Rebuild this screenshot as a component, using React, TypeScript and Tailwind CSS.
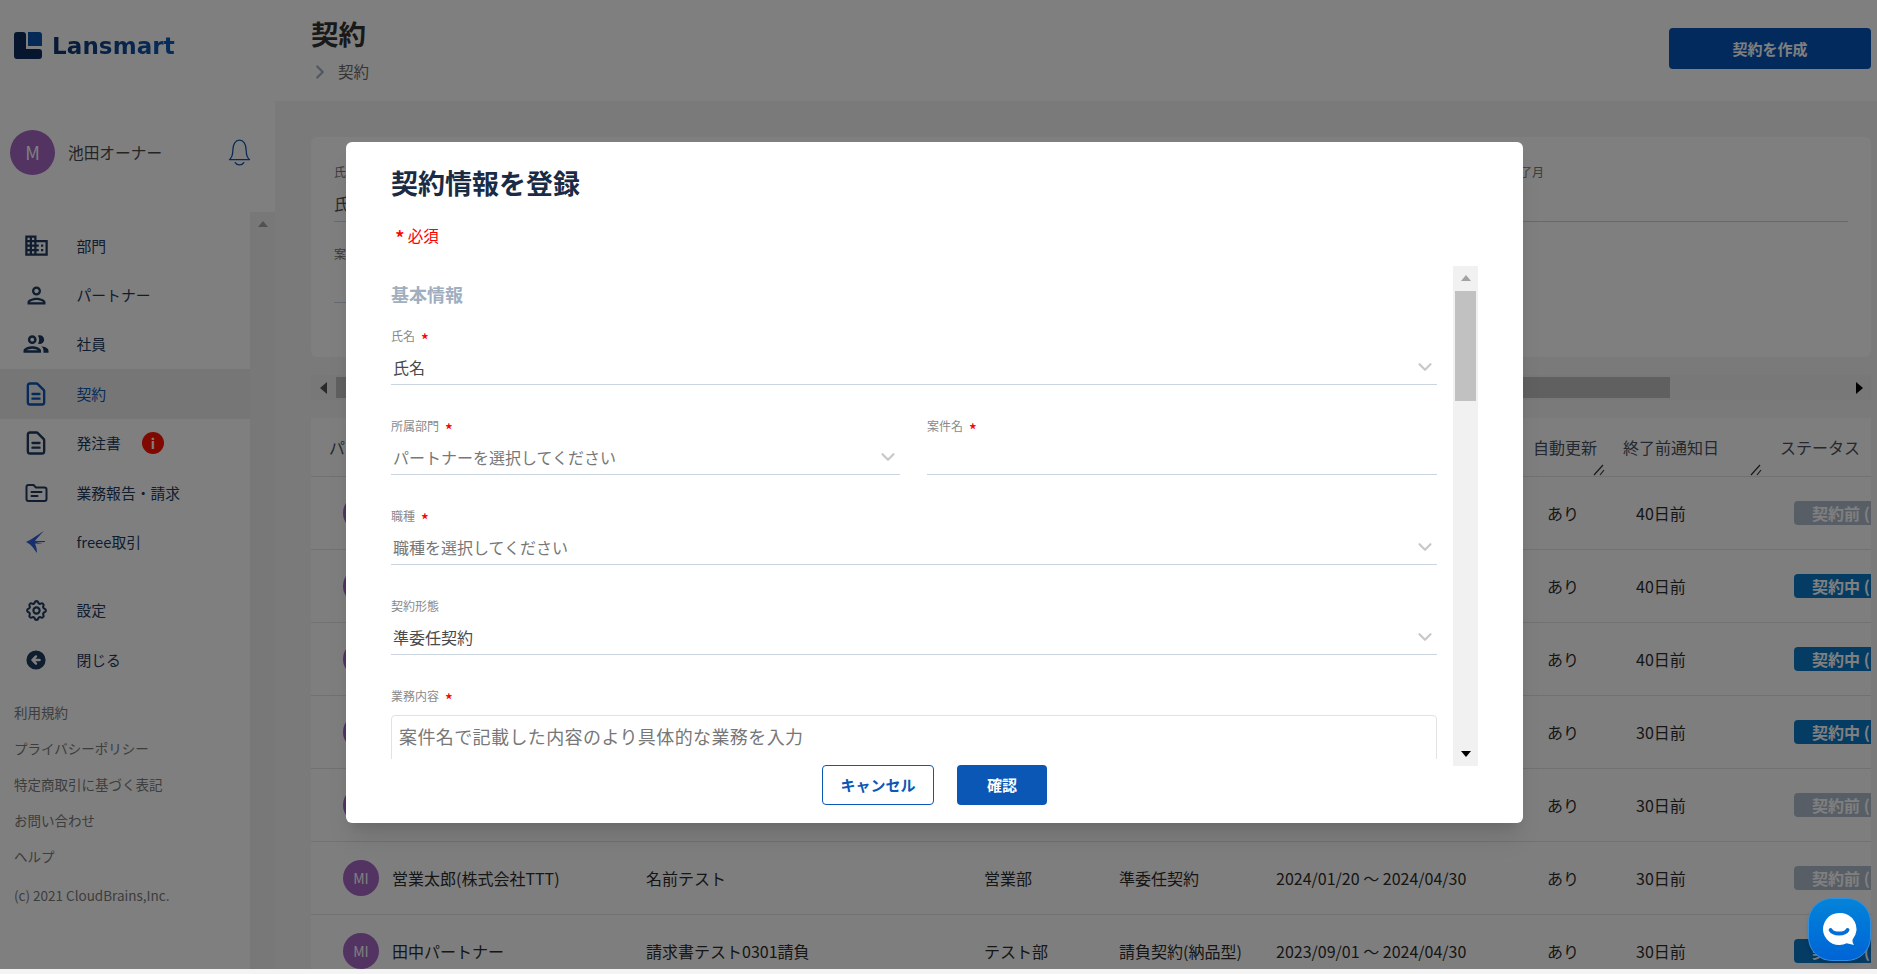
import { MdDomain, MdOutlinePerson, MdOutlinePeople } from "react-icons/md";
import { HiOutlineDocumentText, HiOutlineCog, HiArrowCircleLeft } from "react-icons/hi";
import { ChevronDown, ChevronRight } from "lucide-react";
import type { ReactNode } from "react";

const font = { fontFamily: '"Noto Sans CJK JP", "Noto Sans", sans-serif' };

function FolderIcon() {
  return (
    <svg width="25" height="24" viewBox="0 0 24 24" fill="none" stroke="currentColor" strokeWidth="2" strokeLinejoin="round" strokeLinecap="round">
      <path d="M2 6a2 2 0 0 1 2-2h5l2.5 2.5H20a2 2 0 0 1 2 2V18a2 2 0 0 1-2 2H4a2 2 0 0 1-2-2z" />
      <path d="M7 11h10M7 15h6" />
    </svg>
  );
}

function FreeeIcon() {
  return (
    <svg width="20" height="22" viewBox="0 0 20 22" fill="#2f5fd8">
      <path d="M0 11 C5 9 11 4 18 0 C14 4 11 7 9 10 L19 10 L19 11 L10 11.5 L17 13 L9 12.5 C10 15 11 18 11 22 C8 18 5 13 0 11 Z" />
    </svg>
  );
}

function Bell() {
  return (
    <svg width="23" height="29" viewBox="0 0 24 30" fill="none" stroke="#1253ad" strokeWidth="1.3" strokeLinecap="round" strokeLinejoin="round">
      <path d="M1.500 22.500c2.500-2 3.500-5 3.500-9.500C5 6 8 2 12 2s7 4 7 11c0 4.500 1 7.500 3.500 9.500z" />
      <path d="M7.500 25.500c1 1.700 2.700 2.500 4.500 2.500s3.500-.8 4.500-2.500" />
    </svg>
  );
}

function Logo() {
  return (
    <div className="flex items-center gap-[10px]">
      <svg width="28" height="27" viewBox="0 0 28 27">
        <path d="M3 0h6a3 3 0 0 1 3 3v14h13a3 3 0 0 1 3 3v4a3 3 0 0 1-3 3H3a3 3 0 0 1-3-3V3a3 3 0 0 1 3-3z" fill="#0c2c5e" />
        <path d="M14 0h11a3 3 0 0 1 3 3v11H14z" fill="#0a54b0" />
      </svg>
      <span
        className="mt-[1px] bg-gradient-to-r from-[#11336a] to-[#0a5cbc] bg-clip-text text-[23px] leading-none font-bold tracking-[0.1px] text-transparent"
        style={{ fontFamily: '"DejaVu Sans", sans-serif' }}
      >
        Lansmart
      </span>
    </div>
  );
}

function NavItem({ icon, label, active, badge, mt }: { icon: ReactNode; label: string; active?: boolean; badge?: boolean; mt?: string }) {
  return (
    <div className={`flex h-[49.400px] items-center ${active ? "bg-[#ececec] text-[#0b57b5]" : "text-[#1e3a5f]"} ${mt ?? ""}`}>
      <span className="flex w-[76.500px] shrink-0 items-center justify-center pr-[4.500px]">{icon}</span>
      <span className="text-[14.800px]">{label}</span>
      {badge && (
        <span className="ml-[21px] flex h-[22px] w-[22px] items-center justify-center rounded-full bg-[#ff1200] text-[14px] font-bold text-white">
          i
        </span>
      )}
    </div>
  );
}

function Sidebar() {
  const links = ["利用規約", "プライバシーポリシー", "特定商取引に基づく表記", "お問い合わせ", "ヘルプ"];
  return (
    <aside className="flex w-[275px] shrink-0 flex-col bg-white">
      <div className="h-[212px] shrink-0">
        <div className="pt-[32px] pl-[14px]">
          <Logo />
        </div>
        <div className="mt-[71px] flex items-center pl-[10px]">
          <div className="flex h-[45px] w-[45px] items-center justify-center rounded-full bg-[#a466c4] text-[18px] text-white">M</div>
          <span className="ml-[13px] text-[15.700px] text-[#4a4a4a]">池田オーナー</span>
          <span className="ml-[66px]">
            <Bell />
          </span>
        </div>
      </div>
      <div className="flex min-h-0 flex-1">
        <div className="w-[250px] pt-[9px]">
          <NavItem icon={<MdDomain size={27} />} label="部門" />
          <NavItem icon={<MdOutlinePerson size={27} />} label="パートナー" />
          <NavItem icon={<MdOutlinePeople size={30} />} label="社員" />
          <NavItem icon={<HiOutlineDocumentText size={28} />} label="契約" active />
          <NavItem icon={<HiOutlineDocumentText size={28} />} label="発注書" badge />
          <NavItem icon={<FolderIcon />} label="業務報告・請求" />
          <NavItem icon={<FreeeIcon />} label="freee取引" />
          <NavItem icon={<HiOutlineCog size={25} />} label="設定" mt="mt-[19px]" />
          <NavItem icon={<HiArrowCircleLeft size={24} />} label="閉じる" />
          <div className="mt-[17px] flex flex-col gap-[16px] pl-[14px] text-[13.500px] leading-[20px] text-[#7a7a7a]">
            {links.map((l) => (
              <span key={l}>{l}</span>
            ))}
            <span className="mt-[3px] text-[13.500px]">(c) 2021 CloudBrains,Inc.</span>
          </div>
        </div>
        <div className="flex w-[25px] justify-center bg-[#f1f1f1] pt-[9px]">
          <span className="h-0 w-0 border-x-[5px] border-b-[6px] border-x-transparent border-b-[#a3a3a3]" />
        </div>
      </div>
    </aside>
  );
}

function Badge({ live }: { live: boolean }) {
  return (
    <span
      className={`flex h-[24px] w-[77px] items-center overflow-hidden rounded-l-[4px] pl-[18px] text-[16px] font-bold whitespace-nowrap text-white ${
        live ? "bg-[#0b79c8]" : "bg-[#b0bccd]"
      }`}
    >
      {live ? "契約中 (" : "契約前 ("}
    </span>
  );
}

type Row = { name?: string; title?: string; dept?: string; type?: string; period?: string; notice: string; live: boolean };

const rows: Row[] = [
  { notice: "40日前", live: false },
  { notice: "40日前", live: true },
  { notice: "40日前", live: true },
  { notice: "30日前", live: true },
  { notice: "30日前", live: false },
  { name: "営業太郎(株式会社TTT)", title: "名前テスト", dept: "営業部", type: "準委任契約", period: "2024/01/20 〜 2024/04/30", notice: "30日前", live: false },
  { name: "田中パートナー", title: "請求書テスト0301請負", dept: "テスト部", type: "請負契約(納品型)", period: "2023/09/01 〜 2024/04/30", notice: "30日前", live: true },
];

function ResizeHandle() {
  return (
    <svg width="14" height="14" viewBox="0 0 14 14" fill="none" stroke="#333" strokeWidth="1.200" className="absolute right-[16px] bottom-[-1px]">
      <path d="M1 12L10 2M7 12L11 7" />
    </svg>
  );
}

function ContractTable() {
  return (
    <div className="mt-[18px] bg-[#fdfdfd] text-[16px] text-[#2d2d2d]">
      <div className="relative flex h-[59px] items-center border-b border-[#e2e2e2] text-[#4a5160]">
        <span className="ml-[18px] w-[1204px]">パ</span>
        <span className="relative flex h-full w-[90px] items-center">
          自動更新
          <ResizeHandle />
        </span>
        <span className="relative flex h-full w-[157px] items-center">
          終了前通知日
          <ResizeHandle />
        </span>
        <span>ステータス</span>
      </div>
      {rows.map((r, i) => (
        <div key={i} className="flex h-[73px] items-center border-b border-[#e2e2e2]">
          <span className="ml-[32px] flex h-[36px] w-[36px] shrink-0 items-center justify-center rounded-full bg-[#a466c4] text-[14px] text-white">MI</span>
          <span className="ml-[13px] w-[254px] whitespace-nowrap">{r.name}</span>
          <span className="w-[338px] whitespace-nowrap">{r.title}</span>
          <span className="w-[135px] whitespace-nowrap">{r.dept}</span>
          <span className="w-[157px] whitespace-nowrap">{r.type}</span>
          <span className="w-[271px] whitespace-nowrap">{r.period}</span>
          <span className="w-[89px] whitespace-nowrap">あり</span>
          <span className="w-[158px] whitespace-nowrap">{r.notice}</span>
          <Badge live={r.live} />
        </div>
      ))}
    </div>
  );
}

function Main() {
  return (
    <main className="flex min-w-0 flex-1 flex-col">
      <header className="flex h-[101px] shrink-0 items-start justify-between bg-white pr-[6px] pl-[36px]">
        <div>
          <h1 className="mt-[12px] text-[27.500px] leading-[42px] font-bold text-[#333]">契約</h1>
          <div className="mt-[6px] flex items-center text-[15.500px] text-[#6b6b6b]">
            <ChevronRight size={22} strokeWidth={2.400} className="ml-[-2px] text-[#a0aec0]" />
            <span className="ml-[7px]">契約</span>
          </div>
        </div>
        <button className="mt-[28px] h-[41px] w-[202px] rounded-[4px] bg-[#0655b8] pt-[1px] text-[15px] font-bold text-white">契約を作成</button>
      </header>
      <div className="min-h-0 flex-1 overflow-hidden bg-[#f4f4f4] pt-[36px] pr-[6px] pl-[36px]">
        <div className="h-[220px] rounded-[6px] bg-[#fefefe] px-[23px] pt-[26px]">
          <div className="flex text-[12px] text-[#777]">
            <span>氏名</span>
            <span className="ml-auto pr-[304px]">終了月</span>
          </div>
          <div className="mt-[10px] border-b border-[#cbd5e0] pb-[6px] text-[16px] text-[#555]">氏名</div>
          <div className="mt-[23px] text-[12px] text-[#777]">案件名</div>
          <div className="mt-[39px] w-[300px] border-b border-[#cbd5e0]" />
        </div>
        <div className="mt-[18px] flex h-[25px] items-center bg-[#f1f1f1]">
          <span className="ml-[9px] h-0 w-0 border-y-[6px] border-r-[7px] border-y-transparent border-r-[#555]" />
          <span className="ml-[9px] h-[21px] w-[1334px] bg-[#c1c1c1]" />
          <span className="mr-[8px] ml-auto h-0 w-0 border-y-[6px] border-l-[7px] border-y-transparent border-l-[#000]" />
        </div>
        <ContractTable />
      </div>
    </main>
  );
}

function Label({ text, required }: { text: string; required?: boolean }) {
  return (
    <div className="flex h-[18px] items-center text-[12px] text-[#8a8a8a]">
      {text}
      {required && <span className="mt-[5px] ml-[6px] text-[16px] leading-none font-medium text-[#f00]">*</span>}
    </div>
  );
}

function SelectField({ label, value, required, muted, chevron = true, className }: { label: string; value?: string; required?: boolean; muted?: boolean; chevron?: boolean; className?: string }) {
  return (
    <div className={className}>
      <Label text={label} required={required} />
      <div className="flex h-[40px] items-center justify-between border-b border-[#cbd5e0] pt-[4px] pr-[1px] pl-[2px]">
        <span className={`text-[16px] ${muted ? "text-[#777]" : "text-[#4a4a4a]"}`}>{value}</span>
        {chevron && <ChevronDown size={22} strokeWidth={2.400} className="text-[#c8c8c8]" />}
      </div>
    </div>
  );
}

function Modal() {
  return (
    <div className="absolute top-[142px] left-[346px] flex h-[681px] w-[1177px] flex-col rounded-[6px] bg-white shadow-xl">
      <div className="flex-1 overflow-hidden pl-[45px]">
        <h2 className="mt-[21px] text-[27px] leading-[40px] font-bold text-[#1a2b45]">契約情報を登録</h2>
        <p className="mt-[20px] flex h-[24px] items-center pl-[4px] text-[15.500px] leading-[24px] text-[#f00]">
          <span className="mt-[5px] mr-[3px] text-[20px] leading-none font-medium">*</span>
          必須
        </p>
        <div className="mt-[19px] flex h-[500px] items-start gap-[16px]">
          <div className="h-[493px] w-[1046px] overflow-hidden">
            <h3 className="mt-[15px] text-[18px] leading-[27px] font-bold text-[#a0aec0]">基本情報</h3>
            <div className="mt-[19px] flex flex-col gap-[32px]">
              <SelectField label="氏名" value="氏名" required />
              <div className="flex gap-[27px]">
                <SelectField label="所属部門" value="パートナーを選択してください" required muted className="w-[509px]" />
                <SelectField label="案件名" required chevron={false} className="w-[510px]" />
              </div>
              <SelectField label="職種" value="職種を選択してください" required muted />
              <SelectField label="契約形態" value="準委任契約" />
              <div>
                <Label text="業務内容" required />
                <div className="mt-[10px] h-[80px] rounded-[4px] border border-[#e2e2e2] px-[7px] py-[3px] text-[18px] leading-[34px] tracking-[0.4px] text-[#777]">
                  案件名で記載した内容のより具体的な業務を入力
                </div>
              </div>
            </div>
          </div>
          <div className="flex h-[500px] w-[25px] flex-col items-center bg-[#f1f1f1] pt-[9px]">
            <span className="h-0 w-0 border-x-[5px] border-b-[6px] border-x-transparent border-b-[#a3a3a3]" />
            <span className="mt-[10px] h-[110px] w-[21px] bg-[#c1c1c1]" />
            <span className="mt-auto mb-[9px] h-0 w-0 border-x-[5px] border-t-[6px] border-x-transparent border-t-[#000]" />
          </div>
        </div>
      </div>
      <div className="absolute top-[623px] left-[476px] flex gap-[23px]">
        <button className="h-[40px] w-[112px] rounded-[4px] border border-[#0b57b5] bg-white text-[15px] font-bold text-[#0b57b5]">キャンセル</button>
        <button className="h-[40px] w-[90px] rounded-[4px] bg-[#0b57b5] text-[15px] font-bold text-white">確認</button>
      </div>
    </div>
  );
}

function ChatButton() {
  return (
    <div className="absolute top-[898px] left-[1808px] flex h-[63px] w-[63px] items-center justify-center rounded-[24px] border border-[#2f8fe0] bg-gradient-to-b from-[#0583d9] to-[#0064d6] shadow-md">
      <svg width="34" height="33" viewBox="0 0 36 35">
        <path d="M17 0a17 17 0 1 0 8 32l8 2c-1.500-2-2-4-1.600-6A17 17 0 0 0 17 0z" fill="white" />
        <path d="M8 18c3 5 15 5 18 0" fill="none" stroke="#0070d8" strokeWidth="4" strokeLinecap="round" />
      </svg>
    </div>
  );
}

export default function App() {
  return (
    <div className="relative h-[974px] overflow-hidden bg-[#f4f4f4]" style={font}>
      <div className="flex h-[969px] overflow-hidden">
        <Sidebar />
        <Main />
      </div>
      <div className="absolute inset-x-0 top-0 h-[969px] bg-black/50" />
      <Modal />
      <ChatButton />
    </div>
  );
}
